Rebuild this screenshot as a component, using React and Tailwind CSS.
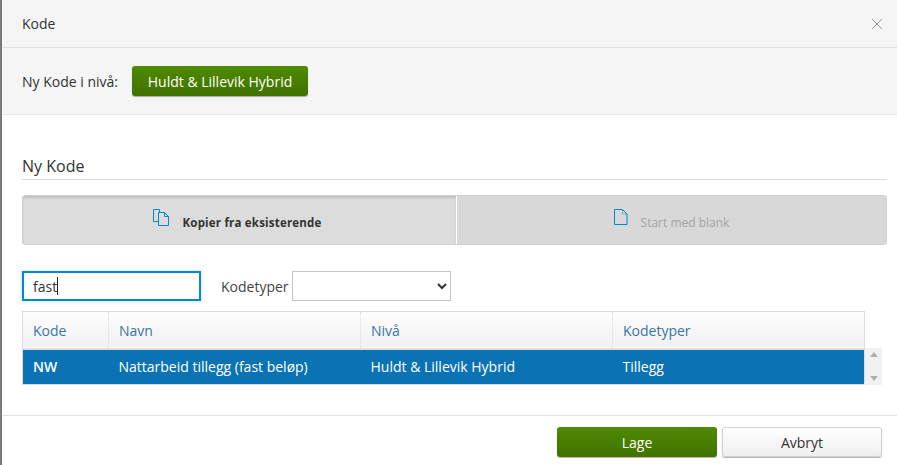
import { X } from 'lucide-react'

function CopyIcon() {
  return (
    <svg width="16" height="17" viewBox="0 0 16 17" fill="none" stroke="#0288d1" strokeWidth="1">
      <path d="M6.5 3.5V0.5H0.5V12.5H5.5" />
      <path d="M5.5 3.5H11.5L15.5 7.5V16.5H5.5Z" />
      <path d="M11.5 3.5V7.5H15.5" />
    </svg>
  )
}

function PageIcon() {
  return (
    <svg width="14" height="17" viewBox="0 0 14 17" fill="none" stroke="#0288d1" strokeWidth="1">
      <path d="M0.5 0.5H8.5L13 5V15.5H0.5Z" />
      <path d="M8.5 0.5V5H13" strokeOpacity="0.5" />
    </svg>
  )
}

function App() {
  return (
    <div
      className="w-[897px] h-[465px] overflow-hidden bg-white border-l-2 border-[#7a7a7a] text-[#333] text-[14px]"
      style={{ fontFamily: '"Open Sans", sans-serif' }}
    >
      <div className="h-[48px] bg-[#f5f5f5] border-b border-[#e0e0e0] flex items-center justify-between pl-[20px] pr-[11px]">
        <span className="text-[14px]">Kode</span>
        <X size={18} strokeWidth={1.25} className="text-[#888] mt-[1px]" />
      </div>

      <div className="h-[67px] bg-[#f5f5f5] border-b border-[#e8e8e8] flex items-center pl-[20px]">
        <span className="text-[14px] mr-[14px]">Ny Kode i nivå:</span>
        <button className="w-[176px] h-[30px] rounded-[3px] text-white text-[14px] bg-gradient-to-b from-[#4f8a00] to-[#417200] shadow-[0_1px_1px_rgba(0,0,0,0.3)]">
          Huldt &amp; Lillevik Hybrid
        </button>
      </div>

      <div className="pl-[20px] pr-[10px]">
        <div className="mt-[40px] h-[25px] border-b border-[#dcdcdc] text-[16px] leading-[22px]">Ny Kode</div>

        <div className="mt-[15px] h-[50px] flex rounded-[3px] bg-[#d8d8d8] border border-[#cfcfcf]">
          <div className="w-[433px] bg-[#dcdcdc] flex items-center justify-center gap-[13px] pr-[4px] shadow-[inset_0_2px_2px_rgba(0,0,0,0.12)] rounded-l-[3px]">
            <span className="-mt-[5px]"><CopyIcon /></span>
            <span className="text-[11.5px] font-bold tracking-[0.2px] text-[#333] mt-[5px]">Kopier fra eksisterende</span>
          </div>
          <div className="w-[1px] bg-white" />
          <div className="flex-1 flex items-center justify-center gap-[13px]">
            <span className="-mt-[5px]"><PageIcon /></span>
            <span className="text-[12px] text-[#a3a3a3] mt-[5px]">Start med blank</span>
          </div>
        </div>

        <div className="mt-[26px] flex items-center">
          <div className="w-[179px] h-[30px] border-2 border-[#0288d1] flex items-center pl-[9px] text-[14px] shadow-[0_0_4px_rgba(2,136,209,0.25)]">
            fast<span className="w-[1px] h-[18px] bg-[#222]" />
          </div>
          <span className="ml-[20px] mr-[3px] text-[14px] text-[#444]">Kodetyper</span>
          <select className="w-[159px] h-[30px] border border-[#c4c4c4] bg-white appearance-auto" defaultValue="">
            <option value=""></option>
          </select>
        </div>

        <div className="mt-[10px] flex items-start">
          <table className="w-[843px] table-fixed border border-[#dedede] border-collapse text-[14px]">
            <thead>
              <tr className="h-[37px] bg-gradient-to-b from-[#fdfdfd] to-[#f1f1f1] text-[#3a75a8] border-b-2 border-[#dedede] text-left">
                <th className="w-[86px] pl-[10px] pt-[1px] font-normal">Kode</th>
                <th className="w-[252px] pl-[10px] pt-[1px] font-normal border-l border-dotted border-[#d8d8d8]">Navn</th>
                <th className="w-[252px] pl-[10px] pt-[1px] font-normal border-l border-dotted border-[#d8d8d8]">Nivå</th>
                <th className="pl-[10px] pt-[1px] font-normal border-l border-dotted border-[#d8d8d8]">Kodetyper</th>
              </tr>
            </thead>
            <tbody>
              <tr className="h-[36px] bg-[#0b72b3] text-white">
                <td className="pl-[10px] font-semibold">NW</td>
                <td className="pl-[10px]">Nattarbeid tillegg (fast beløp)</td>
                <td className="pl-[10px]">Huldt &amp; Lillevik Hybrid</td>
                <td className="pl-[10px]">Tillegg</td>
              </tr>
            </tbody>
          </table>
          <div className="mt-[37px] w-[17px] h-[37px] bg-[#f1f1f1] flex flex-col items-center justify-between py-[4px]">
            <span className="w-0 h-0 border-x-[4px] border-x-transparent border-b-[5px] border-b-[#b0b0b0]" />
            <span className="w-0 h-0 border-x-[4px] border-x-transparent border-t-[5px] border-t-[#b0b0b0]" />
          </div>
        </div>
      </div>

      <div className="mt-[30px] border-t border-[#e4e4e4] pt-[11px] flex justify-end gap-[5px] pr-[15px]">
        <button className="w-[160px] h-[30px] rounded-[3px] text-white text-[14px] bg-gradient-to-b from-[#4f8a00] to-[#417200] shadow-[0_1px_1px_rgba(0,0,0,0.3)]">
          Lage
        </button>
        <button className="w-[160px] h-[30px] rounded-[3px] text-[14px] text-[#333] border border-[#d0d0d0] bg-gradient-to-b from-white to-[#efefef] shadow-[0_1px_1px_rgba(0,0,0,0.3)]">
          Avbryt
        </button>
      </div>
    </div>
  )
}

export default App
